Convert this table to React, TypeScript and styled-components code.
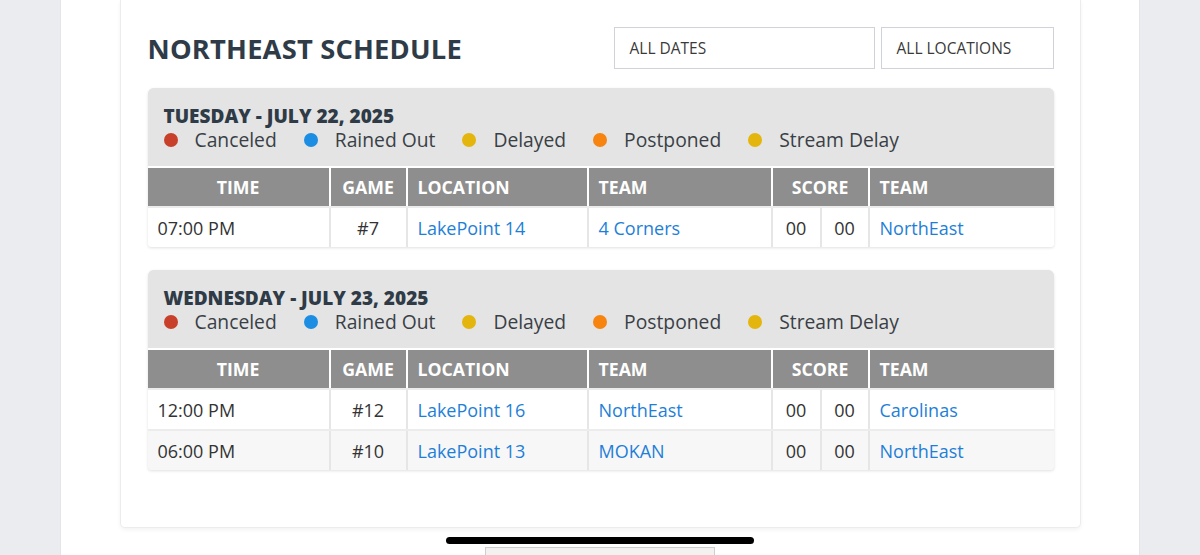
import React from 'react';
import styled, { createGlobalStyle } from 'styled-components';

type Game = {
  time: string;
  game: string;
  location: string;
  home: string;
  away: string;
  scoreA: string;
  scoreB: string;
};

type Day = {
  label: string;
  games: Game[];
};

const legend = [
  { label: 'Canceled', color: '#c9402a' },
  { label: 'Rained Out', color: '#1b8de2' },
  { label: 'Delayed', color: '#e4b50c' },
  { label: 'Postponed', color: '#f6840f' },
  { label: 'Stream Delay', color: '#e4b50c' },
];

const days: Day[] = [
  {
    label: 'TUESDAY - JULY 22, 2025',
    games: [
      { time: '07:00 PM', game: '#7', location: 'LakePoint 14', home: '4 Corners', scoreA: '00', scoreB: '00', away: 'NorthEast' },
    ],
  },
  {
    label: 'WEDNESDAY - JULY 23, 2025',
    games: [
      { time: '12:00 PM', game: '#12', location: 'LakePoint 16', home: 'NorthEast', scoreA: '00', scoreB: '00', away: 'Carolinas' },
      { time: '06:00 PM', game: '#10', location: 'LakePoint 13', home: 'MOKAN', scoreA: '00', scoreB: '00', away: 'NorthEast' },
    ],
  },
];

const GlobalStyle = createGlobalStyle`
  html, body {
    margin: 0;
    padding: 0;
    background: #ebecf0;
    font-family: 'Open Sans', 'Liberation Sans', sans-serif;
    overflow: hidden;
  }
`;

const App: React.FC = () => {
  return (
    <>
      <GlobalStyle />
      <Page>
        <Column>
          <Card>
            <TitleRow>
              <Title>NORTHEAST SCHEDULE</Title>
              <Filters>
                <Select $width={261}>ALL DATES</Select>
                <Select $width={173}>ALL LOCATIONS</Select>
              </Filters>
            </TitleRow>

            {days.map((day) => (
              <DayBlock key={day.label}>
                <DayHead>
                  <DayLabel>{day.label}</DayLabel>
                  <Legend>
                    {legend.map((item) => (
                      <LegendItem key={item.label}>
                        <Dot $color={item.color} />
                        {item.label}
                      </LegendItem>
                    ))}
                  </Legend>
                </DayHead>
                <HeadRow>
                  <HeadCell $align="center">TIME</HeadCell>
                  <HeadCell $align="center">GAME</HeadCell>
                  <HeadCell>LOCATION</HeadCell>
                  <HeadCell>TEAM</HeadCell>
                  <HeadCell $align="center" $span={2}>SCORE</HeadCell>
                  <HeadCell>TEAM</HeadCell>
                </HeadRow>
                {day.games.map((g, i) => (
                  <DataRow key={g.game} $striped={i % 2 === 1}>
                    <Cell>{g.time}</Cell>
                    <Cell $align="center">{g.game}</Cell>
                    <Cell><Link>{g.location}</Link></Cell>
                    <Cell><Link>{g.home}</Link></Cell>
                    <Cell $align="center">{g.scoreA}</Cell>
                    <Cell $align="center">{g.scoreB}</Cell>
                    <Cell><Link>{g.away}</Link></Cell>
                  </DataRow>
                ))}
              </DayBlock>
            ))}
          </Card>
          <PeekButton />
        </Column>
      </Page>
      <HomeIndicator />
    </>
  );
};

const Page = styled.div`
  width: 1200px;
  height: 555px;
  display: flex;
  justify-content: center;
  overflow: hidden;
`;

const Column = styled.div`
  width: 1078px;
  height: 555px;
  background: #ffffff;
  border-left: 1px solid #e4e5e8;
  border-right: 1px solid #e4e5e8;
  display: flex;
  flex-direction: column;
  align-items: center;
`;

const Card = styled.div`
  box-sizing: border-box;
  width: 961px;
  height: 528px;
  flex-shrink: 0;
  padding: 27px 26px 0 27px;
  background: #ffffff;
  border: 1px solid #ececec;
  border-top: none;
  border-radius: 0 0 5px 5px;
  box-shadow: 0 2px 4px rgba(0, 0, 0, 0.05);
  display: flex;
  flex-direction: column;
  gap: 23px;
`;

const TitleRow = styled.div`
  display: flex;
  align-items: center;
  justify-content: space-between;
  height: 42px;
  margin-bottom: -4px;
`;

const Title = styled.h1`
  margin: 0;
  font-size: 27.3px;
  font-weight: 700;
  color: #2f3b47;
  letter-spacing: 0.2px;
`;

const Filters = styled.div`
  display: flex;
  gap: 6px;
`;

const Select = styled.div<{ $width: number }>`
  box-sizing: border-box;
  width: ${({ $width }) => $width}px;
  height: 42px;
  padding: 0 15px;
  border: 1px solid #cfd2d8;
  display: flex;
  align-items: center;
  font-size: 15.5px;
  color: #3a3a3a;
`;

const DayBlock = styled.div`
  display: flex;
  flex-direction: column;
  gap: 2px;
  border-radius: 6px 6px 3px 3px;
  background: #ececec;
  box-shadow: 0 1px 3px rgba(0, 0, 0, 0.12);
  overflow: hidden;
`;

const DayHead = styled.div`
  box-sizing: border-box;
  background: #e4e4e4;
  padding: 15px 16px 0;
  height: 78px;
  display: flex;
  flex-direction: column;
`;

const DayLabel = styled.div`
  font-size: 19px;
  font-weight: 800;
  color: #2f3b47;
  line-height: 26px;
`;

const Legend = styled.div`
  display: flex;
  gap: 27px;
`;

const LegendItem = styled.div`
  display: flex;
  align-items: center;
  gap: 17px;
  font-size: 19.3px;
  color: #3a3f46;
  line-height: 22px;
`;

const Dot = styled.span<{ $color: string }>`
  width: 14px;
  height: 14px;
  border-radius: 50%;
  background: ${({ $color }) => $color};
`;

const cols = 'grid-template-columns: 181px 75px 179px 182px 47px 46px 184px;';

const HeadRow = styled.div`
  display: grid;
  ${cols}
  gap: 2px;
  background: #ffffff;
  margin-top: -2px;
  padding-top: 2px;
  height: 38px;
`;

const HeadCell = styled.div<{ $align?: string; $span?: number }>`
  background: #8e8e8e;
  color: #ffffff;
  font-size: 17.7px;
  font-weight: 700;
  display: flex;
  align-items: center;
  justify-content: ${({ $align }) => ($align === 'center' ? 'center' : 'flex-start')};
  padding: 0 10px;
  grid-column: span ${({ $span }) => $span || 1};
`;

const DataRow = styled.div<{ $striped: boolean }>`
  display: grid;
  ${cols}
  gap: 2px;
  height: 39px;
  background: #e6e6e6;

  & > div {
    background: ${({ $striped }) => ($striped ? '#f7f7f7' : '#ffffff')};
  }
`;

const Cell = styled.div<{ $align?: string }>`
  display: flex;
  align-items: center;
  justify-content: ${({ $align }) => ($align === 'center' ? 'center' : 'flex-start')};
  padding: 0 10px;
  font-size: 18px;
  color: #333333;
`;

const Link = styled.span`
  color: #1e7fd8;
`;

const PeekButton = styled.div`
  width: 228px;
  height: 20px;
  margin-top: 19px;
  flex-shrink: 0;
  background: #f3f2f0;
  border: 1px solid #cfcfcf;
`;

const HomeIndicator = styled.div`
  position: absolute;
  left: 446px;
  top: 537px;
  width: 308px;
  height: 7px;
  border-radius: 4px;
  background: #000000;
`;

export default App;
